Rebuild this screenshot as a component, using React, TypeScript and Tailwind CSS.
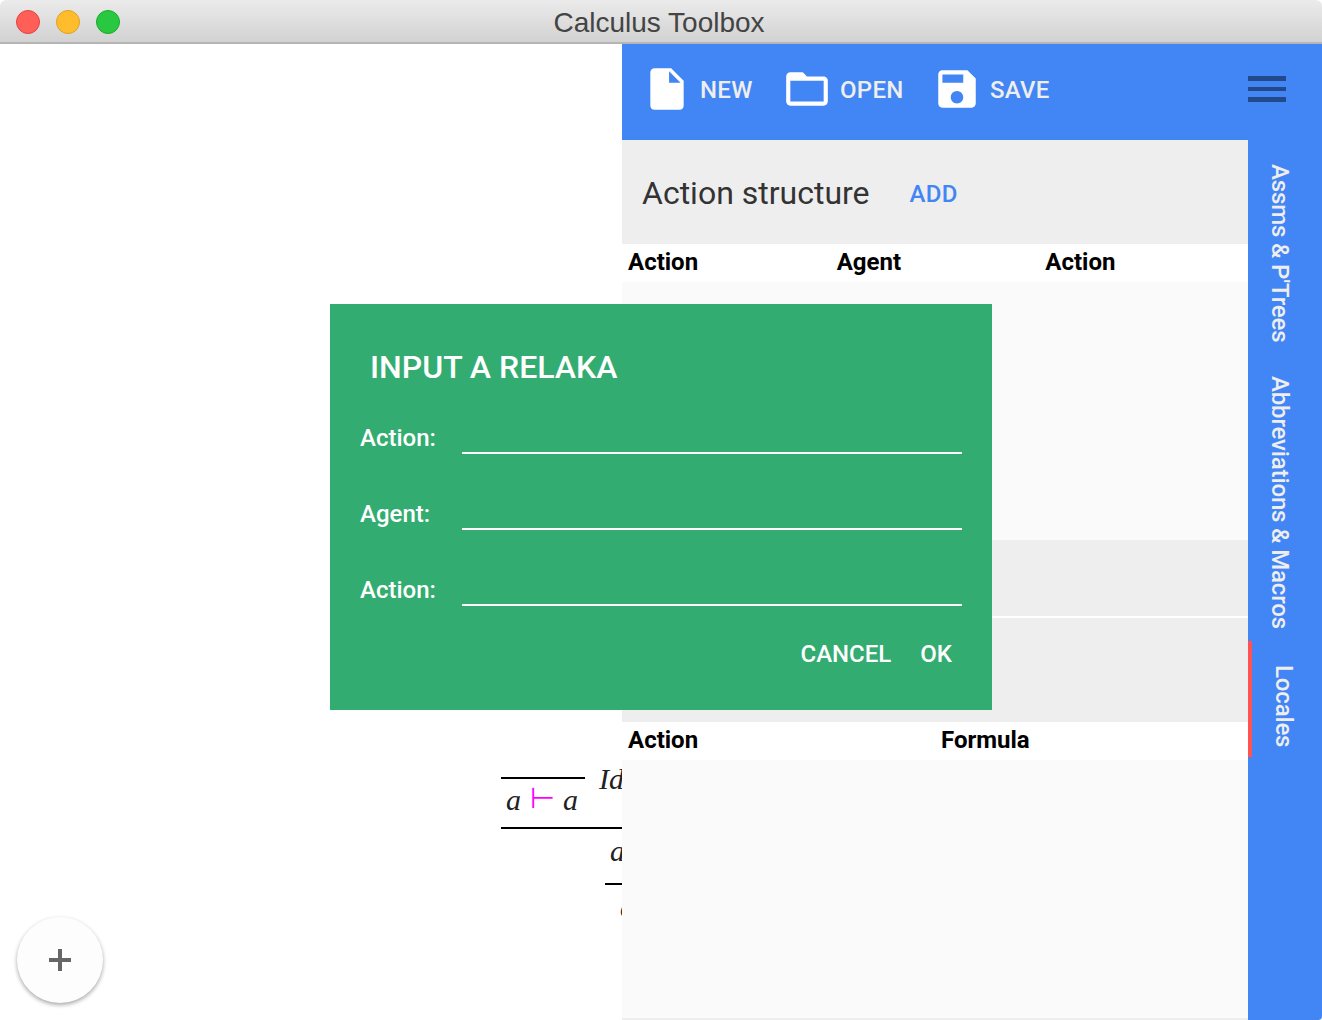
import React from 'react';

const roboto = "font-['Roboto',sans-serif]";

function ToolButton({ d, label, className }: { d: string; label: string; className: string }) {
    return (
        <div className={`flex items-center gap-2 ${className}`}>
            <svg viewBox="0 0 24 24" className="h-[50px] w-[50px] fill-white">
                <path d={d} />
            </svg>
            <span className="pt-[2px] text-[24px] leading-none font-medium tracking-[0.3px] text-[#eeeeee]">{label}</span>
        </div>
    );
}

function SideTab({ label, active }: { label: string; active?: boolean }) {
    return (
        <div className={`flex justify-center pt-6 ${active ? 'mt-0.5 border-l-4 border-[#ff5252] pr-[6px] pb-[9px]' : 'pr-[10px] pb-[10px]'}`}>
            <span className="text-[24px] leading-[28px] font-medium tracking-[-0.15px] text-[#eeeeee] [writing-mode:vertical-rl]">{label}</span>
        </div>
    );
}

function DialogRow({ label }: { label: string }) {
    return (
        <div className="flex h-[76px] items-center">
            <span className="w-[102px] text-[24px] leading-none font-medium text-white">{label}</span>
            <div className="mt-[30px] h-[2px] w-[500px] bg-white" />
        </div>
    );
}

function SectionHeader({ title, add }: { title: string; add?: boolean }) {
    return (
        <div className="flex h-[104px] items-center gap-10 bg-[#eeeeee] px-5 pt-1">
            <span className="mb-[2px] text-[32px] leading-none text-[#333333]">{title}</span>
            {add && <span className="text-[24px] leading-none font-medium tracking-[0.3px] text-[#4285f4]">ADD</span>}
        </div>
    );
}

function App() {
    return (
        <div className={`flex h-[1020px] w-[1322px] flex-col overflow-hidden bg-white ${roboto}`}>
            <div className="relative flex h-[44px] shrink-0 items-center justify-center rounded-t-[6px] border-b-2 border-[#b5b5b5] bg-gradient-to-b from-[#ebebeb] to-[#d2d2d2]">
                <div className="absolute top-[10px] left-[16px] flex gap-[16px]">
                    <div className="h-6 w-6 rounded-full border border-[#e0443e] bg-[#ff5f57]" />
                    <div className="h-6 w-6 rounded-full border border-[#dea123] bg-[#ffbd2e]" />
                    <div className="h-6 w-6 rounded-full border border-[#1aab29] bg-[#28c840]" />
                </div>
                <span className="mr-1 pt-[3px] font-['Liberation_Sans',sans-serif] text-[28px] leading-none text-[#444444]">Calculus Toolbox</span>
            </div>

            <div className="relative flex flex-1">
                <div className="relative w-[622px] shrink-0 overflow-hidden font-['Liberation_Serif',serif] text-[30px] text-[#222222] italic">
                    <div className="absolute top-[733px] left-[501px] h-[2px] w-[84px] bg-black" />
                    <span className="absolute top-[739px] left-[506px] leading-[34px]">a</span>
                    <span className="absolute top-[737px] left-[530px] font-['DejaVu_Sans',sans-serif] text-[29px] leading-[34px] text-[#ff00ff] not-italic">⊢</span>
                    <span className="absolute top-[739px] left-[563px] leading-[34px]">a</span>
                    <span className="absolute top-[718px] left-[599px] leading-[34px]">Id</span>
                    <div className="absolute top-[783px] left-[501px] h-[2px] w-[121px] bg-black" />
                    <span className="absolute top-[790px] left-[610px] leading-[34px]">a</span>
                    <div className="absolute top-[839px] left-[605px] h-[2px] w-[17px] bg-black" />
                    <span className="absolute top-[846px] left-[620px] leading-[34px]">a</span>

                    <div className="absolute top-[873px] left-[17px] flex h-[86px] w-[86px] items-center justify-center rounded-full bg-[#fdfdfd] shadow-[0_2px_4px_rgba(0,0,0,0.35)]">
                        <svg viewBox="0 0 22 22" className="h-[22px] w-[22px] stroke-[#666666] stroke-[4px]">
                            <path d="M0 11H22M11 0V22" />
                        </svg>
                    </div>
                </div>

                <div className="flex min-w-0 flex-1 flex-col">
                    <div className="flex h-[96px] shrink-0 items-center bg-[#4285f4] pb-[6px] pl-5">
                        <ToolButton
                            className="w-[140px]"
                            label="NEW"
                            d="M6 2c-1.1 0-2 .9-2 2v16c0 1.1.9 2 2 2h12c1.1 0 2-.9 2-2V8l-6-6H6zm7 7V3.5L18.5 9H13z"
                        />
                        <ToolButton
                            className="w-[150px]"
                            label="OPEN"
                            d="M20 6h-8l-2-2H4c-1.1 0-1.99.9-1.99 2L2 18c0 1.1.9 2 2 2h16c1.1 0 2-.9 2-2V8c0-1.1-.9-2-2-2zm0 12H4V8h16v10z"
                        />
                        <ToolButton
                            className="w-[150px]"
                            label="SAVE"
                            d="M17 3H5c-1.11 0-2 .9-2 2v14c0 1.1.89 2 2 2h14c1.1 0 2-.9 2-2V7l-4-4zm-5 16c-1.66 0-3-1.34-3-3s1.34-3 3-3 3 1.34 3 3-1.34 3-3 3zm3-10H5V5h10v4z"
                        />
                        <div className="mr-9 ml-auto flex flex-col gap-[6px]">
                            <div className="h-[4.5px] w-[38px] bg-[#22498a]" />
                            <div className="h-[4.5px] w-[38px] bg-[#22498a]" />
                            <div className="h-[4.5px] w-[38px] bg-[#22498a]" />
                        </div>
                    </div>

                    <div className="flex flex-1">
                        <div className="flex w-[626px] shrink-0 flex-col">
                            <SectionHeader title="Action structure" add />
                            <div className="grid h-[38px] grid-cols-3 items-center pb-0.5 text-[24px] leading-none font-bold text-black">
                                <span className="pl-[6px]">Action</span>
                                <span className="pl-[6px]">Agent</span>
                                <span className="pl-[6px]">Action</span>
                            </div>
                            <div className="h-[258px] bg-[#fafafa]" />
                            <div className="h-[76px] bg-[#eeeeee]" />
                            <div className="h-[2px] bg-white" />
                            <div className="h-[104px] bg-[#eeeeee]" />
                            <div className="grid h-[38px] grid-cols-2 items-center pb-0.5 text-[24px] leading-none font-bold text-black">
                                <span className="pl-[6px]">Action</span>
                                <span className="pl-[6px]">Formula</span>
                            </div>
                            <div className="h-[258px] bg-[#fafafa]" />
                            <div className="h-[2px] bg-[#eeeeee]" />
                        </div>
                        <div className="flex min-w-0 flex-1 flex-col rounded-br-[4px] bg-[#4285f4]">
                            <SideTab label="Assms & P'Trees" />
                            <SideTab label="Abbreviations & Macros" />
                            <SideTab label="Locales" active />
                        </div>
                    </div>
                </div>

                <div className="absolute top-[260px] left-[330px] h-[406px] w-[662px] bg-[#33ac71] px-[30px]">
                    <div className="pt-[44px] pb-[14px] pl-[10px] text-[32px] leading-[38px] font-medium text-white">INPUT A RELAKA</div>
                    <DialogRow label="Action:" />
                    <DialogRow label="Agent:" />
                    <DialogRow label="Action:" />
                    <div className="mt-[14px] flex justify-end gap-[29px] pr-[10px] text-[24px] leading-none font-medium text-white">
                        <span>CANCEL</span>
                        <span>OK</span>
                    </div>
                </div>
            </div>
        </div>
    );
}

export default App;
